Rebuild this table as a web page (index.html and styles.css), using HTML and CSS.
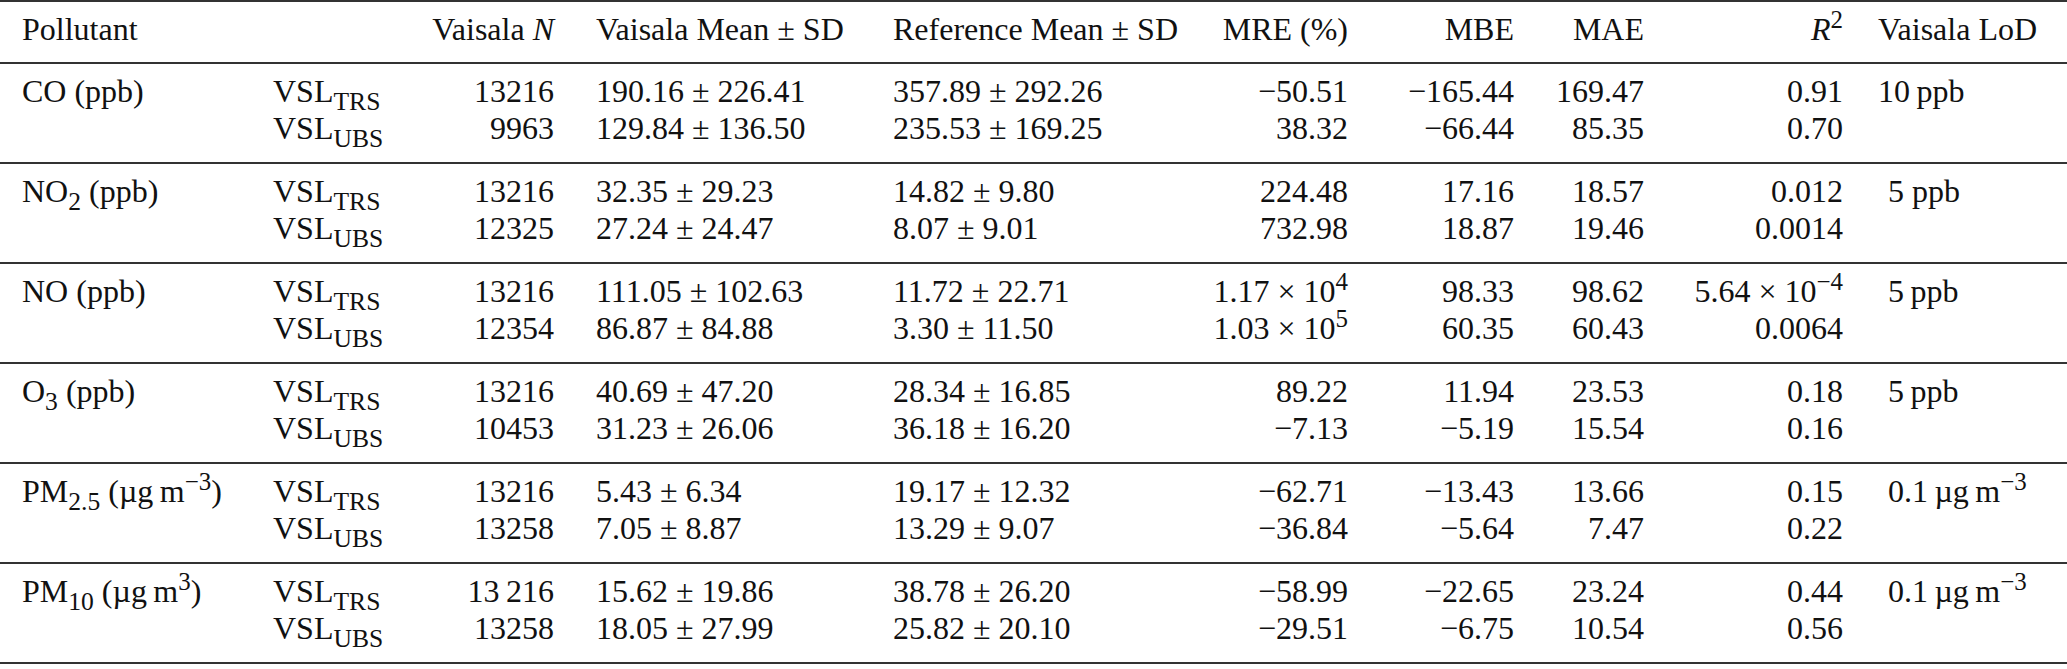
FILE: index.html
```html
<!DOCTYPE html>
<html lang="en">
<head>
<meta charset="utf-8">
<title>Vaisala comparison table</title>
<link rel="stylesheet" href="styles.css">
</head>
<body>
<table class="tbl">
  <colgroup>
    <col class="w1"><col class="w2"><col class="w3"><col class="w4"><col class="w5">
    <col class="w6"><col class="w7"><col class="w8"><col class="w9"><col class="w10">
  </colgroup>
  <thead>
    <tr>
      <th class="first">Pollutant</th>
      <th></th>
      <th class="num">Vaisala <i>N</i></th>
      <th class="mean">Vaisala Mean ± SD</th>
      <th>Reference Mean ± SD</th>
      <th class="num">MRE (%)</th>
      <th class="num">MBE</th>
      <th class="num">MAE</th>
      <th class="num"><i>R</i><sup>2</sup></th>
      <th class="lod">Vaisala LoD</th>
    </tr>
  </thead>
  <tbody class="grp">
    <tr>
      <td class="first">CO (ppb)</td><td>VSL<sub>TRS</sub></td><td class="num">13216</td>
      <td class="mean">190.16 ± 226.41</td><td>357.89 ± 292.26</td>
      <td class="num">−50.51</td><td class="num">−165.44</td><td class="num">169.47</td>
      <td class="num">0.91</td><td class="lod">10&#8201;ppb</td>
    </tr>
    <tr>
      <td class="first"></td><td>VSL<sub>UBS</sub></td><td class="num">9963</td>
      <td class="mean">129.84 ± 136.50</td><td>235.53 ± 169.25</td>
      <td class="num">38.32</td><td class="num">−66.44</td><td class="num">85.35</td>
      <td class="num">0.70</td><td class="lod"></td>
    </tr>
  </tbody>
  <tbody class="grp">
    <tr>
      <td class="first">NO<sub>2</sub> (ppb)</td><td>VSL<sub>TRS</sub></td><td class="num">13216</td>
      <td class="mean">32.35 ± 29.23</td><td>14.82 ± 9.80</td>
      <td class="num">224.48</td><td class="num">17.16</td><td class="num">18.57</td>
      <td class="num">0.012</td><td class="lod ind">5 ppb</td>
    </tr>
    <tr>
      <td class="first"></td><td>VSL<sub>UBS</sub></td><td class="num">12325</td>
      <td class="mean">27.24 ± 24.47</td><td>8.07 ± 9.01</td>
      <td class="num">732.98</td><td class="num">18.87</td><td class="num">19.46</td>
      <td class="num">0.0014</td><td class="lod"></td>
    </tr>
  </tbody>
  <tbody class="grp">
    <tr>
      <td class="first">NO (ppb)</td><td>VSL<sub>TRS</sub></td><td class="num">13216</td>
      <td class="mean">111.05 ± 102.63</td><td>11.72 ± 22.71</td>
      <td class="num">1.17 × 10<sup>4</sup></td><td class="num">98.33</td><td class="num">98.62</td>
      <td class="num">5.64 × 10<sup>−4</sup></td><td class="lod ind">5&#8201;ppb</td>
    </tr>
    <tr>
      <td class="first"></td><td>VSL<sub>UBS</sub></td><td class="num">12354</td>
      <td class="mean">86.87 ± 84.88</td><td>3.30 ± 11.50</td>
      <td class="num">1.03 × 10<sup>5</sup></td><td class="num">60.35</td><td class="num">60.43</td>
      <td class="num">0.0064</td><td class="lod"></td>
    </tr>
  </tbody>
  <tbody class="grp">
    <tr>
      <td class="first">O<sub>3</sub> (ppb)</td><td>VSL<sub>TRS</sub></td><td class="num">13216</td>
      <td class="mean">40.69 ± 47.20</td><td>28.34 ± 16.85</td>
      <td class="num">89.22</td><td class="num">11.94</td><td class="num">23.53</td>
      <td class="num">0.18</td><td class="lod ind">5&#8201;ppb</td>
    </tr>
    <tr>
      <td class="first"></td><td>VSL<sub>UBS</sub></td><td class="num">10453</td>
      <td class="mean">31.23 ± 26.06</td><td>36.18 ± 16.20</td>
      <td class="num">−7.13</td><td class="num">−5.19</td><td class="num">15.54</td>
      <td class="num">0.16</td><td class="lod"></td>
    </tr>
  </tbody>
  <tbody class="grp">
    <tr>
      <td class="first">PM<sub>2.5</sub> (µg&#8201;m<sup>−3</sup>)</td><td>VSL<sub>TRS</sub></td><td class="num">13216</td>
      <td class="mean">5.43 ± 6.34</td><td>19.17 ± 12.32</td>
      <td class="num">−62.71</td><td class="num">−13.43</td><td class="num">13.66</td>
      <td class="num">0.15</td><td class="lod ind">0.1&#8201;µg&#8201;m<sup>−3</sup></td>
    </tr>
    <tr>
      <td class="first"></td><td>VSL<sub>UBS</sub></td><td class="num">13258</td>
      <td class="mean">7.05 ± 8.87</td><td>13.29 ± 9.07</td>
      <td class="num">−36.84</td><td class="num">−5.64</td><td class="num">7.47</td>
      <td class="num">0.22</td><td class="lod"></td>
    </tr>
  </tbody>
  <tbody class="grp">
    <tr>
      <td class="first">PM<sub>10</sub> (µg&#8201;m<sup>3</sup>)</td><td>VSL<sub>TRS</sub></td><td class="num">13&#8201;216</td>
      <td class="mean">15.62 ± 19.86</td><td>38.78 ± 26.20</td>
      <td class="num">−58.99</td><td class="num">−22.65</td><td class="num">23.24</td>
      <td class="num">0.44</td><td class="lod ind">0.1&#8201;µg&#8201;m<sup>−3</sup></td>
    </tr>
    <tr>
      <td class="first"></td><td>VSL<sub>UBS</sub></td><td class="num">13258</td>
      <td class="mean">18.05 ± 27.99</td><td>25.82 ± 20.10</td>
      <td class="num">−29.51</td><td class="num">−6.75</td><td class="num">10.54</td>
      <td class="num">0.56</td><td class="lod"></td>
    </tr>
  </tbody>
</table>
</body>
</html>
```

FILE: styles.css
```css
html, body {
  margin: 0;
  padding: 0;
  background: #ffffff;
}

.tbl {
  border-collapse: separate;
  border-spacing: 0;
  table-layout: fixed;
  width: 2067px;
  font-family: "Liberation Serif", "Times New Roman", serif;
  font-size: 32px;
  line-height: 37px;
  color: #111111;
}

.w1 { width: 273px; }
.w2 { width: 127px; }
.w3 { width: 154px; }
.w4 { width: 339px; }
.w5 { width: 296px; }
.w6 { width: 159px; }
.w7 { width: 166px; }
.w8 { width: 130px; }
.w9 { width: 199px; }
.w10 { width: 224px; }

.tbl th,
.tbl td {
  padding: 0;
  text-align: left;
  vertical-align: baseline;
  white-space: nowrap;
  font-weight: normal;
  box-sizing: border-box;
}

.tbl thead th {
  border-top: 2px solid #333333;
  border-bottom: 2px solid #333333;
  padding-top: 9px;
  padding-bottom: 14px;
}

.grp tr:first-child td {
  padding-top: 9px;
}

.grp tr:last-child td {
  padding-bottom: 15px;
  border-bottom: 2px solid #333333;
}

.tbl .first { padding-left: 22px; }
.tbl .mean { padding-left: 42px; }
.tbl .num { text-align: right; }
.tbl .lod { padding-left: 35px; }
.tbl .lod.ind { padding-left: 45px; }

.tbl sub {
  font-size: 0.8em;
  line-height: 0;
  vertical-align: -0.3em;
}

.tbl sup {
  font-size: 0.78em;
  line-height: 0;
  vertical-align: 0.5em;
}
```
